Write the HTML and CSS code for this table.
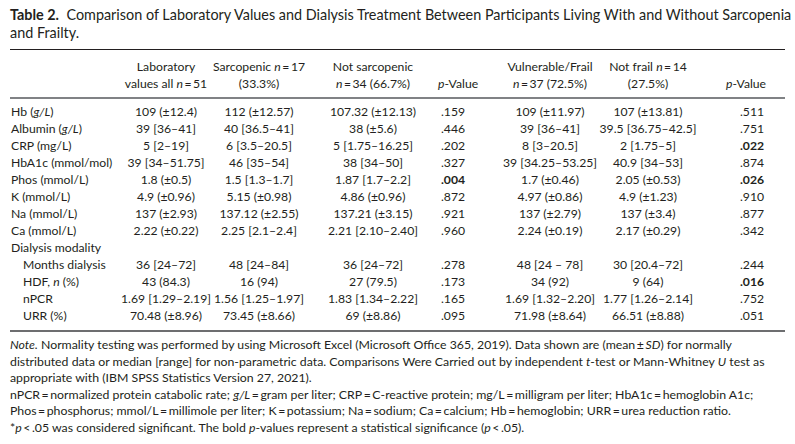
FILE: index.html
```html
<!DOCTYPE html>
<html lang="en">
<head>
<meta charset="utf-8">
<title>Table 2</title>
<link rel="stylesheet" href="styles.css">
</head>
<body>
<div class="page">
  <div class="caption"><span class="cap-label">Table 2.</span>&nbsp; Comparison of Laboratory Values and Dialysis Treatment Between Participants Living With and Without Sarcopenia<br>and Frailty.</div>
  <table class="data">
    <colgroup>
      <col class="w-label"><col class="w-c1"><col class="w-c2"><col class="w-c3"><col class="w-p1"><col class="w-c4"><col class="w-c5"><col class="w-p2">
    </colgroup>
    <thead>
      <tr>
        <th class="label"></th>
        <th>Laboratory<br>values all <i>n</i>&#8201;=&#8201;51</th>
        <th>Sarcopenic <i>n</i>&#8201;=&#8201;17<br>(33.3%)</th>
        <th>Not sarcopenic<br><i>n</i>&#8201;=&#8201;34 (66.7%)</th>
        <th><i>p</i>-Value</th>
        <th>Vulnerable/Frail<br><i>n</i>&#8201;=&#8201;37 (72.5%)</th>
        <th>Not frail <i>n</i>&#8201;=&#8201;14<br>(27.5%)</th>
        <th><i>p</i>-Value</th>
      </tr>
    </thead>
    <tbody>
      <tr class="first"><td class="label">Hb (<i>g/L</i>)</td><td>109 (±12.4)</td><td>112 (±12.57)</td><td>107.32 (±12.13)</td><td>.159</td><td>109 (±11.97)</td><td>107 (±13.81)</td><td>.511</td></tr>
      <tr><td class="label">Albumin (<i>g/L</i>)</td><td>39 [36–41]</td><td>40 [36.5–41]</td><td>38 (±5.6)</td><td>.446</td><td>39 [36–41]</td><td>39.5 [36.75–42.5]</td><td>.751</td></tr>
      <tr><td class="label">CRP (mg/L)</td><td>5 [2–19]</td><td>6 [3.5–20.5]</td><td>5 [1.75–16.25]</td><td>.202</td><td>8 [3–20.5]</td><td>2 [1.75–5]</td><td><b>.022</b></td></tr>
      <tr><td class="label">HbA1c (mmol/mol)</td><td>39 [34–51.75]</td><td>46 [35–54]</td><td>38 [34–50]</td><td>.327</td><td>39 [34.25–53.25]</td><td>40.9 [34–53]</td><td>.874</td></tr>
      <tr><td class="label">Phos (mmol/L)</td><td>1.8 (±0.5)</td><td>1.5 [1.3–1.7]</td><td>1.87 [1.7–2.2]</td><td><b>.004</b></td><td>1.7 (±0.46)</td><td>2.05 (±0.53)</td><td><b>.026</b></td></tr>
      <tr><td class="label">K (mmol/L)</td><td>4.9 (±0.96)</td><td>5.15 (±0.98)</td><td>4.86 (±0.96)</td><td>.872</td><td>4.97 (±0.86)</td><td>4.9 (±1.23)</td><td>.910</td></tr>
      <tr><td class="label">Na (mmol/L)</td><td>137 (±2.93)</td><td>137.12 (±2.55)</td><td>137.21 (±3.15)</td><td>.921</td><td>137 (±2.79)</td><td>137 (±3.4)</td><td>.877</td></tr>
      <tr><td class="label">Ca (mmol/L)</td><td>2.22 (±0.22)</td><td>2.25 [2.1–2.4]</td><td>2.21 [2.10–2.40]</td><td>.960</td><td>2.24 (±0.19)</td><td>2.17 (±0.29)</td><td>.342</td></tr>
      <tr><td class="label">Dialysis modality</td><td></td><td></td><td></td><td></td><td></td><td></td><td></td></tr>
      <tr><td class="label sub">Months dialysis</td><td>36 [24–72]</td><td>48 [24–84]</td><td>36 [24–72]</td><td>.278</td><td>48 [24 – 78]</td><td>30 [20.4–72]</td><td>.244</td></tr>
      <tr><td class="label sub">HDF, <i>n</i> (%)</td><td>43 (84.3)</td><td>16 (94)</td><td>27 (79.5)</td><td>.173</td><td>34 (92)</td><td>9 (64)</td><td><b>.016</b></td></tr>
      <tr><td class="label sub">nPCR</td><td>1.69 [1.29–2.19]</td><td>1.56 [1.25–1.97]</td><td>1.83 [1.34–2.22]</td><td>.165</td><td>1.69 [1.32–2.20]</td><td>1.77 [1.26–2.14]</td><td>.752</td></tr>
      <tr class="last"><td class="label sub">URR (%)</td><td>70.48 (±8.96)</td><td>73.45 (±8.66)</td><td>69 (±8.86)</td><td>.095</td><td>71.98 (±8.64)</td><td>66.51 (±8.88)</td><td>.051</td></tr>
    </tbody>
  </table>
  <div class="notes">
    <p><i>Note.</i> Normality testing was performed by using Microsoft Excel (Microsoft Office 365, 2019). Data shown are (mean&#8201;±&#8201;<i>SD</i>) for normally<br>distributed data or median [range] for non-parametric data. Comparisons Were Carried out by independent <i>t</i>-test or Mann-Whitney <i>U</i> test as<br>appropriate with (IBM SPSS Statistics Version 27, 2021).</p>
    <p>nPCR&#8201;=&#8201;normalized protein catabolic rate; <i>g/L</i>&#8201;=&#8201;gram per liter; CRP&#8201;=&#8201;C-reactive protein; mg/L&#8201;=&#8201;milligram per liter; HbA1c&#8201;=&#8201;hemoglobin A1c;<br>Phos&#8201;=&#8201;phosphorus; mmol/L&#8201;=&#8201;millimole per liter; K&#8201;=&#8201;potassium; Na&#8201;=&#8201;sodium; Ca&#8201;=&#8201;calcium; Hb&#8201;=&#8201;hemoglobin; URR&#8201;=&#8201;urea reduction ratio.</p>
    <p>*<i>p</i>&#8201;&lt;&#8201;.05 was considered significant. The bold <i>p</i>-values represent a statistical significance (<i>p</i>&#8201;&lt;&#8201;.05).</p>
  </div>
</div>
</body>
</html>
```
FILE: styles.css
```css
html, body {
  margin: 0;
  padding: 0;
  background: #ffffff;
}

body {
  font-family: "Lato", "Open Sans", sans-serif;
  color: #231f20;
}

.page {
  width: 775px;
  padding: 6px 0 0 10px;
}

.caption {
  font-size: 14.4px;
  line-height: 18px;
  margin-bottom: 7px;
  white-space: nowrap;
}

.cap-label {
  font-weight: bold;
}

.data {
  width: 775px;
  border-collapse: collapse;
  table-layout: fixed;
  font-size: 12.2px;
  border-top: 1px solid #231f20;
  border-bottom: 2px solid #6d6e70;
}

.w-label { width: 110px; }
.w-c1 { width: 92px; }
.w-c2 { width: 94px; }
.w-c3 { width: 128px; }
.w-p1 { width: 44px; }
.w-c4 { width: 120px; }
.w-c5 { width: 100px; }
.w-p2 { width: 87px; }

.data thead tr {
  border-bottom: 2px solid #808285;
}

.data th {
  font-weight: normal;
  line-height: 17px;
  padding: 8px 0 5px 0;
  text-align: center;
  vertical-align: bottom;
  white-space: nowrap;
}

.data td {
  line-height: 17px;
  padding: 0;
  text-align: center;
  white-space: nowrap;
}

.data .label {
  text-align: left;
  padding-left: 1px;
}

.data .label.sub {
  padding-left: 13px;
}

.data tr.first td { padding-top: 4px; }
.data tr.last td { padding-bottom: 6px; }

/* fine horizontal placement of columns */
.data td:nth-child(4),
.data th:nth-child(4) { padding-left: 6px; }
.data td:nth-child(5) { padding-right: 6px; }
.data th:nth-child(5) { padding-left: 4px; }
.data td:nth-child(6),
.data th:nth-child(6) { padding-left: 24px; }
.data td:nth-child(8) { padding-left: 21px; }
.data th:nth-child(8) { padding-left: 21px; padding-right: 12px; }

.notes {
  margin-top: 5px;
  font-size: 12.3px;
  line-height: 16.6px;
}

.notes p {
  margin: 0;
  white-space: nowrap;
}
```
